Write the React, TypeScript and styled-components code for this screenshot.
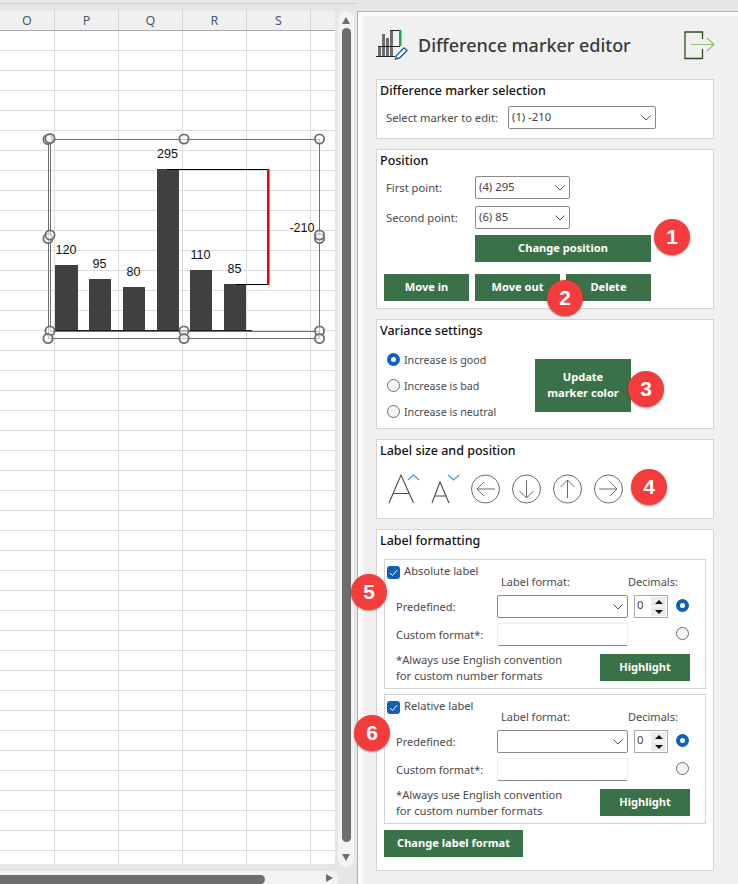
import styled, { createGlobalStyle } from "styled-components";

const GlobalStyle = createGlobalStyle`
  html, body {
    margin: 0;
    padding: 0;
    background: #e6e6e6;
    font-family: "Noto Sans", "Open Sans", sans-serif;
  }
  * {
    box-sizing: border-box;
  }
`;

const Page = styled.div`
  position: relative;
  display: flex;
  width: 738px;
  height: 884px;
  overflow: hidden;
  background: #e6e6e6;
`;

/* left side: the worksheet */
const LeftPane = styled.div`
  display: flex;
  flex-direction: column;
  width: 357px;
  flex: none;
`;
const TopStrip = styled.div`
  height: 11px;
  flex: none;
  margin-top: 3px;
  border-top: 1px solid #cfcfcf;
  margin-bottom: -3px;
`;
const SheetRow = styled.div`
  display: flex;
  height: 873px;
  flex: none;
`;
const SheetColumn = styled.div`
  display: flex;
  flex-direction: column;
  width: 338px;
  flex: none;
`;
const ColumnHeaders = styled.div`
  display: flex;
  width: 335px;
  height: 20px;
  flex: none;
  background: #f0f0f0;
  border-bottom: 1px solid #ababab;
`;
const ColumnHeader = styled.div<{ $width: number }>`
  width: ${(p) => p.$width}px;
  flex: none;
  text-align: center;
  font-size: 12.5px;
  line-height: 20px;
  color: #4a5a6a;
  border-right: 1px solid #d4d4d4;
  &:last-child {
    border-right: none;
  }
`;
const Grid = styled.div`
  position: relative;
  width: 335px;
  height: 833px;
  flex: none;
  background-color: #fff;
  background-image: linear-gradient(to right, #dddddd 1px, transparent 1px),
    linear-gradient(to bottom, #dddddd 1px, transparent 1px);
  background-size: 64px 100%, 100% 20px;
  background-position: 54px 0, 0 19px;
`;
const ChartLayer = styled.svg`
  position: absolute;
  left: 40px;
  top: 100px;
`;
const HScroll = styled.div`
  position: relative;
  width: 338px;
  height: 13px;
  margin-top: 7px;
  flex: none;
  background: #f3f3f3;
  border-radius: 0 7px 0 0;
`;
const HThumb = styled.div`
  position: absolute;
  left: 0;
  bottom: 0;
  width: 265px;
  height: 9px;
  background: #6e6e6e;
  border-radius: 0 5px 5px 0;
`;
const HArrow = styled.div`
  position: absolute;
  left: 326px;
  top: 3px;
  width: 0;
  height: 0;
  border-top: 4.5px solid transparent;
  border-bottom: 4.5px solid transparent;
  border-left: 7px solid #6e6e6e;
`;
const VScroll = styled.div`
  position: relative;
  width: 16px;
  height: 856px;
  flex: none;
  background: #f3f3f3;
  border-radius: 8px;
`;
const VThumb = styled.div`
  position: absolute;
  left: 4px;
  top: 17px;
  width: 9px;
  height: 814px;
  background: #6e6e6e;
  border-radius: 5px;
`;
const VArrow = styled.div<{ $down?: boolean }>`
  position: absolute;
  left: 4px;
  ${(p) => (p.$down ? "bottom: 6px;" : "top: 6px;")}
  width: 0;
  height: 0;
  border-left: 4.5px solid transparent;
  border-right: 4.5px solid transparent;
  ${(p) =>
    p.$down
      ? "border-top: 7px solid #6e6e6e;"
      : "border-bottom: 7px solid #6e6e6e;"}
`;

/* right side: the task pane */
const PaneFrame = styled.div`
  flex: 1;
  margin-top: 11px;
  padding: 4px 0 0 5px;
  background: #fbfbfb;
  border-left: 1px solid #a9afbb;
  border-top: 1px solid #b4b4b4;
`;
const Panel = styled.div`
  display: flex;
  flex-direction: column;
  gap: 10px;
  height: 100%;
  padding-left: 13px;
  background: #f0f0f0;
`;
const Header = styled.div`
  display: flex;
  align-items: center;
  width: 340px;
  height: 53px;
  padding-top: 4px;
  flex: none;
`;
const HeaderIcon = styled.svg`
  width: 32px;
  height: 32px;
  margin-right: 10px;
  flex: none;
`;
const Title = styled.div`
  flex: 1;
  font-size: 18px;
  font-weight: 500;
  letter-spacing: -0.03px;
  color: #3b3b3b;
`;
const ExitIcon = styled.svg`
  width: 32px;
  height: 30px;
  margin-top: 3px;
  flex: none;
`;
const Section = styled.section<{ $height: number }>`
  width: 338px;
  height: ${(p) => p.$height}px;
  flex: none;
  padding: 2px 0 0 3px;
  background: #fff;
  border: 1px solid #d4d4d4;
`;
const SectionTitle = styled.div`
  font-size: 12.5px;
  font-weight: 500;
  line-height: 17px;
  color: #111;
`;
const FieldRow = styled.div<{ $top: number; $labelWidth: number }>`
  display: grid;
  grid-template-columns: ${(p) => p.$labelWidth}px auto;
  justify-content: start;
  align-items: center;
  margin-top: ${(p) => p.$top}px;
  padding-left: 6px;
`;
const Label = styled.span`
  font-size: 11.2px;
  color: #4a4a4a;
  white-space: nowrap;
`;
const RadioLabel = styled(Label)`
  font-size: 10.7px;
`;
const FormLabel = styled(Label)`
  font-size: 11px;
`;
const Select = styled.div<{ $width: number }>`
  display: flex;
  align-items: center;
  justify-content: space-between;
  width: ${(p) => p.$width}px;
  height: 23px;
  padding: 0 4px 3px 3px;
  font-size: 11.3px;
  color: #444;
  background: #fff;
  border: 1px solid #8a8a8a;
  border-radius: 2px;
`;
const Chevron = styled.svg`
  width: 10px;
  height: 6px;
  margin-top: 3px;
  flex: none;
`;
const GreenButton = styled.div<{ $width: number; $height?: number }>`
  display: flex;
  align-items: center;
  justify-content: center;
  width: ${(p) => p.$width}px;
  height: ${(p) => p.$height ?? 27}px;
  flex: none;
  padding-bottom: 2px;
  text-align: center;
  font-size: 11.1px;
  font-weight: 700;
  line-height: 16px;
  color: #fff;
  background: #3a7148;
`;
const ChangeRow = styled.div`
  margin: 6px 0 0 95px;
`;
const MoveRow = styled.div`
  display: flex;
  gap: 6px;
  margin: 12px 0 0 4px;
`;
const VarianceBody = styled.div`
  display: flex;
  align-items: flex-start;
  margin-top: 6px;
`;
const RadioList = styled.div`
  display: flex;
  flex-direction: column;
  gap: 13px;
  width: 155px;
  padding: 8px 0 0 7px;
`;
const RadioRow = styled.div`
  display: flex;
  align-items: center;
  gap: 4px;
  height: 13px;
`;
const Radio = styled.span<{ $on?: boolean }>`
  display: block;
  width: 13px;
  height: 13px;
  flex: none;
  border-radius: 50%;
  background: ${(p) => (p.$on ? "#fff" : "#f5f5f5")};
  border: ${(p) => (p.$on ? "4px solid #0f62b5" : "1px solid #6e6e6e")};
`;
const ColorButton = styled(GreenButton)`
  margin-top: 14px;
`;
const IconRow = styled.div`
  display: flex;
  align-items: center;
  margin: 14px 0 0 8px;
`;
const SizeIcons = styled.svg`
  width: 76px;
  height: 32px;
  flex: none;
`;
const CircleIcons = styled.svg`
  width: 168px;
  height: 32px;
  margin-left: 6px;
  flex: none;
`;
const FormatBox = styled.div<{ $top: number }>`
  width: 322px;
  height: 130px;
  margin: ${(p) => p.$top}px 0 0 4px;
  border: 1px solid #d4d4d4;
`;
const FormGrid = styled.div`
  display: grid;
  grid-template-columns: 101px 131px 40px 21px;
  grid-template-rows: 30px 23px 23px;
  row-gap: 5px;
  padding-left: 11px;
  align-items: center;
`;
const CheckRow = styled.div`
  display: flex;
  align-items: flex-start;
  gap: 4px;
  height: 14px;
  margin: 6px 0 0 -9px;
  align-self: start;
  grid-column: 1;
`;
const CheckBox = styled.span`
  display: flex;
  align-items: center;
  justify-content: center;
  width: 13px;
  height: 13px;
  flex: none;
  background: #0f62b5;
  border-radius: 3px;
`;
const CheckLabel = styled(Label)`
  margin-top: -3px;
`;
const ColumnTitle = styled(FormLabel)<{ $shift: number; $span?: boolean }>`
  align-self: end;
  margin-left: ${(p) => p.$shift}px;
  margin-bottom: 1px;
  ${(p) => (p.$span ? "grid-column: 3 / 5;" : "")}
`;
const FormSelect = styled(Select)`
  width: 131px;
`;
const TextField = styled.div`
  width: 131px;
  height: 23px;
  background: #fff;
  border: 1px solid #ececec;
  border-bottom-color: #8a8a8a;
  border-radius: 2px;
`;
const Spinner = styled.div`
  display: flex;
  justify-content: space-between;
  width: 34px;
  height: 23px;
  margin-left: 6px;
  padding: 1px;
  font-size: 11.3px;
  color: #444;
  border: 1px solid #a8a8a8;
  background: #fff;
`;
const SpinnerValue = styled.span`
  padding-left: 1px;
  line-height: 15px;
`;
const SpinnerButtons = styled.div`
  display: flex;
  flex-direction: column;
  gap: 1px;
  width: 15px;
`;
const SpinnerButton = styled.div<{ $down?: boolean }>`
  display: flex;
  align-items: center;
  justify-content: center;
  flex: 1;
  background: #ececec;
  &::before {
    content: "";
    border-left: 4px solid transparent;
    border-right: 4px solid transparent;
    ${(p) =>
      p.$down
        ? "border-top: 4px solid #111;"
        : "border-bottom: 4px solid #111;"}
  }
`;
const FormRadio = styled(Radio)`
  margin: -2px 0 0 8px;
`;
const NoteRow = styled.div`
  display: flex;
  justify-content: space-between;
  margin-top: 8px;
  padding: 0 15px 0 11px;
`;
const Note = styled.div`
  margin-top: -2px;
  font-size: 11.2px;
  line-height: 16px;
  color: #4a4a4a;
`;
const ApplyRow = styled.div`
  margin: 6px 0 0 4px;
`;
const Badge = styled.div<{ $x: number; $y: number }>`
  position: absolute;
  left: ${(p) => p.$x - 18}px;
  top: ${(p) => p.$y - 18}px;
  display: flex;
  align-items: center;
  justify-content: center;
  width: 36px;
  height: 36px;
  font-family: "Liberation Sans", Arial, sans-serif;
  font-size: 21px;
  font-weight: 700;
  color: #fff;
  background: #f43c3c;
  border-radius: 50%;
  box-shadow: 0 1px 2px rgba(0, 0, 0, 0.4);
`;

const columns = [
  { name: "O", width: 55 },
  { name: "P", width: 64 },
  { name: "Q", width: 64 },
  { name: "R", width: 64 },
  { name: "S", width: 64 },
  { name: "", width: 24 },
];

const bars = [
  { x: 55, w: 23, top: 265, label: "120", ly: 254 },
  { x: 89, w: 22, top: 279, label: "95", ly: 268 },
  { x: 123, w: 22, top: 287, label: "80", ly: 276 },
  { x: 157, w: 22, top: 169, label: "295", ly: 158 },
  { x: 190, w: 22, top: 270, label: "110", ly: 259 },
  { x: 224, w: 22, top: 284, label: "85", ly: 273 },
];

const handles = [
  [48, 139.5], [50, 138.5], [184, 139], [319.5, 139],
  [48, 238.5], [50, 235], [319.5, 238.5], [319.5, 235],
  [50, 331], [184, 331], [319.5, 331],
  [48, 338.5], [184, 338.5], [319.5, 338.5],
];

const Chart = () => (
  <ChartLayer width={295} height={230} viewBox="40 131 295 230">
    <g fill="none" stroke="#6e6e6e" strokeWidth={1}>
      <rect x={50.5} y={139.5} width={269} height={192} />
      <rect x={48.5} y={139.5} width={271} height={199} />
    </g>
    {bars.map((b) => (
      <rect key={b.x} x={b.x} y={b.top} width={b.w} height={331 - b.top} fill="#404040" />
    ))}
    <line x1={55} y1={330.5} x2={252} y2={330.5} stroke="#222" strokeWidth={1} />
    <line x1={167} y1={169.5} x2={268} y2={169.5} stroke="#000" strokeWidth={1} />
    <line x1={236} y1={284.5} x2={268} y2={284.5} stroke="#000" strokeWidth={1} />
    <rect x={267} y={169} width={2.5} height={116} fill="#f00000" />
    {handles.map(([x, y]) => (
      <circle key={`${x}-${y}`} cx={x} cy={y} r={4.6} fill="#fff" fillOpacity={0.6} stroke="#6e6e6e" strokeWidth={1.8} />
    ))}
    <g fontFamily="'Liberation Sans', Arial, sans-serif" fontSize={12.6} fill="#111" textAnchor="middle">
      {bars.map((b) => (
        <text key={b.label} x={b.x + b.w / 2 - 0.5} y={b.ly}>
          {b.label}
        </text>
      ))}
      <text x={302} y={232}>-210</text>
    </g>
  </ChartLayer>
);

const Caret = () => (
  <Chevron viewBox="0 0 10 6">
    <path d="M0.5 0.5 L5 5 L9.5 0.5" fill="none" stroke="#555" strokeWidth={1} />
  </Chevron>
);

const FormatGroup = ({ name, top }: { name: string; top: number }) => (
  <FormatBox $top={top}>
    <FormGrid>
      <CheckRow>
        <CheckBox>
          <svg width={9} height={8} viewBox="0 0 9 8">
            <path d="M1 4 L3.5 6.5 L8 1.2" fill="none" stroke="#fff" strokeWidth={1} />
          </svg>
        </CheckBox>
        <CheckLabel>{name}</CheckLabel>
      </CheckRow>
      <ColumnTitle $shift={4}>Label format:</ColumnTitle>
      <ColumnTitle $shift={0} $span>
        Decimals:
      </ColumnTitle>
      <FormLabel>Predefined:</FormLabel>
      <FormSelect $width={131}>
        <span />
        <Caret />
      </FormSelect>
      <Spinner>
        <SpinnerValue>0</SpinnerValue>
        <SpinnerButtons>
          <SpinnerButton />
          <SpinnerButton $down />
        </SpinnerButtons>
      </Spinner>
      <FormRadio $on />
      <FormLabel>Custom format*:</FormLabel>
      <TextField />
      <span />
      <FormRadio />
    </FormGrid>
    <NoteRow>
      <Note>
        *Always use English convention
        <br />
        for custom number formats
      </Note>
      <GreenButton $width={90}>Highlight</GreenButton>
    </NoteRow>
  </FormatBox>
);

export default function App() {
  return (
    <>
      <GlobalStyle />
      <Page>
        <LeftPane>
          <TopStrip />
          <SheetRow>
            <SheetColumn>
              <ColumnHeaders>
                {columns.map((c) => (
                  <ColumnHeader key={c.name} $width={c.width}>
                    {c.name}
                  </ColumnHeader>
                ))}
              </ColumnHeaders>
              <Grid>
                <Chart />
              </Grid>
              <HScroll>
                <HThumb />
                <HArrow />
              </HScroll>
            </SheetColumn>
            <VScroll>
              <VArrow />
              <VThumb />
              <VArrow $down />
            </VScroll>
          </SheetRow>
        </LeftPane>

        <PaneFrame>
          <Panel>
            <Header>
              <HeaderIcon viewBox="0 0 32 32">
                <g fill="#6e6e6e">
                  <rect x={2} y={17} width={3} height={10} />
                  <rect x={6} y={5} width={3} height={22} />
                  <rect x={10} y={9} width={3} height={18} />
                  <rect x={14} y={1} width={3} height={26} />
                </g>
                <path d="M0 27.5 H19 M2 17.5 H24 M14 1.5 H24" stroke="#222" strokeWidth={1} fill="none" />
                <rect x={23} y={1} width={2.5} height={16} fill="#1fa84f" />
                <path d="M19.5 30 L20.5 26.5 L28 19 L31 21.5 L23.5 29 Z" fill="#fff" stroke="#1f5f9e" strokeWidth={1.4} />
              </HeaderIcon>
              <Title>Difference marker editor</Title>
              <ExitIcon viewBox="0 0 32 30">
                <path d="M18.5 8 V1 H1 V27.5 H18.5 V18" fill="none" stroke="#2e4d1f" strokeWidth={1.3} />
                <path d="M7 13.5 H30 M23 7 L30 13.5 L23 20" fill="none" stroke="#8dc26f" strokeWidth={1.2} />
              </ExitIcon>
            </Header>

            <Section $height={60}>
              <SectionTitle>Difference marker selection</SectionTitle>
              <FieldRow $top={7} $labelWidth={122}>
                <Label>Select marker to edit:</Label>
                <Select $width={148}>
                  <span>(1) -210</span>
                  <Caret />
                </Select>
              </FieldRow>
            </Section>

            <Section $height={160}>
              <SectionTitle>Position</SectionTitle>
              <FieldRow $top={7} $labelWidth={89}>
                <Label>First point:</Label>
                <Select $width={95}>
                  <span>(4) 295</span>
                  <Caret />
                </Select>
              </FieldRow>
              <FieldRow $top={7} $labelWidth={89}>
                <Label>Second point:</Label>
                <Select $width={95}>
                  <span>(6) 85</span>
                  <Caret />
                </Select>
              </FieldRow>
              <ChangeRow>
                <GreenButton $width={176}>Change position</GreenButton>
              </ChangeRow>
              <MoveRow>
                <GreenButton $width={85}>Move in</GreenButton>
                <GreenButton $width={85}>Move out</GreenButton>
                <GreenButton $width={85}>Delete</GreenButton>
              </MoveRow>
            </Section>

            <Section $height={110}>
              <SectionTitle>Variance settings</SectionTitle>
              <VarianceBody>
                <RadioList>
                  <RadioRow>
                    <Radio $on />
                    <RadioLabel>Increase is good</RadioLabel>
                  </RadioRow>
                  <RadioRow>
                    <Radio />
                    <RadioLabel>Increase is bad</RadioLabel>
                  </RadioRow>
                  <RadioRow>
                    <Radio />
                    <RadioLabel>Increase is neutral</RadioLabel>
                  </RadioRow>
                </RadioList>
                <ColorButton $width={96} $height={53}>
                  Update
                  <br />
                  marker color
                </ColorButton>
              </VarianceBody>
            </Section>

            <Section $height={80}>
              <SectionTitle>Label size and position</SectionTitle>
              <IconRow>
                <SizeIcons viewBox="0 0 76 32">
                  <g fill="none" stroke="#4a4a4a" strokeWidth={1.1}>
                    <path d="M1 30 L13 2 L25.5 30 M5.5 20.5 H21" />
                    <path d="M44 30 L52 9 L61 30 M47 23 H58" />
                  </g>
                  <g fill="none" stroke="#3a9ad9" strokeWidth={1.1}>
                    <path d="M20 7 L25.5 2 L31 7" />
                    <path d="M60 2 L65.5 7 L71 2" />
                  </g>
                </SizeIcons>
                <CircleIcons viewBox="0 0 168 32" fill="none" stroke="#6a6a6a" strokeWidth={1}>
                  <circle cx={15.5} cy={16} r={14} />
                  <path d="M7 16 H25 M14 9 L7 16 L14 23" />
                  <circle cx={56.5} cy={16} r={14} />
                  <path d="M56.5 7 V25 M49.5 18 L56.5 25 L63.5 18" />
                  <circle cx={97.5} cy={16} r={14} />
                  <path d="M97.5 25 V7 M90.5 14 L97.5 7 L104.5 14" />
                  <circle cx={138.5} cy={16} r={14} />
                  <path d="M147 16 H129 M140 9 L147 16 L140 23" />
                </CircleIcons>
              </IconRow>
            </Section>

            <Section $height={342}>
              <SectionTitle>Label formatting</SectionTitle>
              <FormatGroup name="Absolute label" top={10} />
              <FormatGroup name="Relative label" top={5} />
              <ApplyRow>
                <GreenButton $width={139}>Change label format</GreenButton>
              </ApplyRow>
            </Section>
          </Panel>
        </PaneFrame>

        <Badge $x={672} $y={237}>1</Badge>
        <Badge $x={565} $y={298}>2</Badge>
        <Badge $x={646} $y={389}>3</Badge>
        <Badge $x={649} $y={487}>4</Badge>
        <Badge $x={369} $y={592}>5</Badge>
        <Badge $x={372} $y={733}>6</Badge>
      </Page>
    </>
  );
}
